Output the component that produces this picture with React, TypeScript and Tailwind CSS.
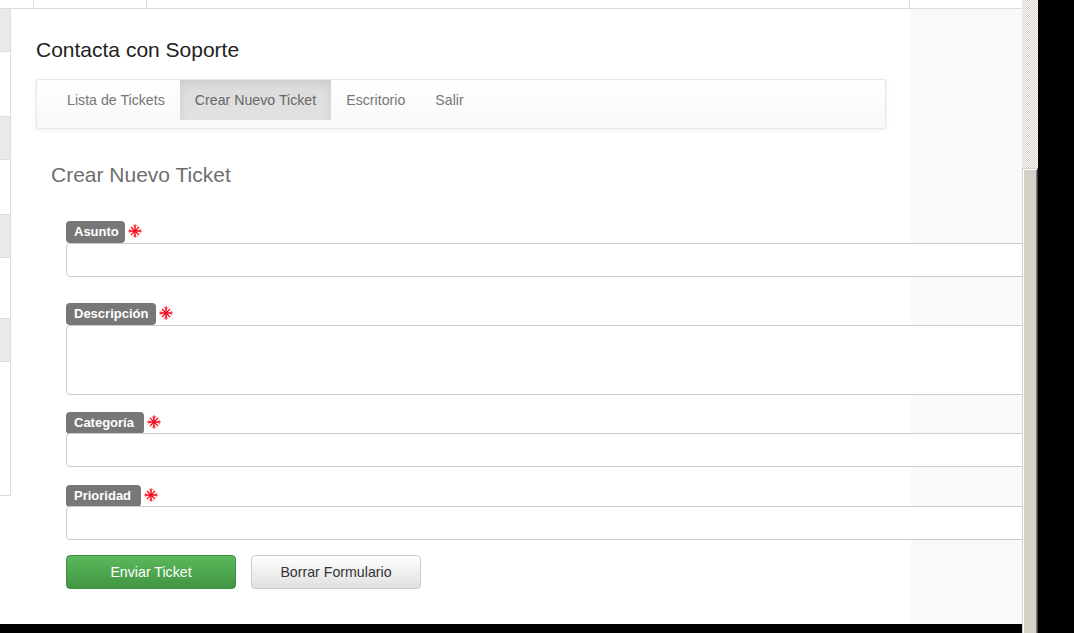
import React from 'react';

const Star = () => (
  <svg viewBox="0 0 14 14" className="-mt-0.5 h-[14px] w-[14px] shrink-0" fill="none">
    <path d="M4.6 1L7 3.4 9.4 1M4.6 13L7 10.6 9.4 13M1 4.6L3.4 7 1 9.4M13 4.6L10.6 7 13 9.4" stroke="#ff5a2c" strokeWidth="0.9" />
    <path d="M7 0.5v13M0.5 7h13" stroke="#f0001c" strokeWidth="1.4" />
    <path d="M3 3l8 8M11 3l-8 8" stroke="#f0001c" strokeWidth="1.2" />
  </svg>
);

const Label = ({ text, width }: { text: string; width: string }) => (
  <div className="flex h-[22px] items-center gap-[3px]">
    <span className={`flex h-[22px] items-center rounded-[4px] bg-[#777] pb-px pl-2 text-[13px] font-bold leading-none text-white ${width}`}>
      {text}
    </span>
    <Star />
  </div>
);

const fieldBox = 'relative block w-[1000px] rounded-[4px] border border-[#ccc] bg-white';

const tabs = ['Lista de Tickets', 'Crear Nuevo Ticket', 'Escritorio', 'Salir'];

const App = () => {
  return (
    <div className="flex h-[633px] w-[1074px] overflow-hidden bg-black font-['Liberation_Sans',Arial,sans-serif]">
      <div className="flex h-[624px] w-[1022px] shrink-0 flex-col overflow-hidden bg-white">
        {/* table header behind the modal */}
        <div className="flex h-[9px] shrink-0 border-b border-[#dcdde3]">
          <div className="w-[34px] border-r border-[#dcdde3]" />
          <div className="w-[113px] border-r border-[#dcdde3]" />
          <div className="w-[763px] border-r border-[#dcdde3]" />
        </div>
        <div className="flex min-h-0 flex-1">
          <div className="flex h-[487px] w-[11px] shrink-0 flex-col border-r border-b border-[#dcdde3]">
            <div className="h-[43px] border-b border-[#dcdde3] bg-[#e9e9e9]" />
            <div className="h-[65px] border-b border-[#dcdde3]" />
            <div className="h-[43px] border-b border-[#dcdde3] bg-[#e9e9e9]" />
            <div className="h-[55px] border-b border-[#dcdde3]" />
            <div className="h-[43px] border-b border-[#dcdde3] bg-[#e9e9e9]" />
            <div className="h-[61px] border-b border-[#dcdde3]" />
            <div className="h-[43px] border-b border-[#dcdde3] bg-[#e9e9e9]" />
          </div>
          <div className="min-w-0 flex-1 bg-[linear-gradient(to_right,#fff_900px,#f9f9f9_900px)] pl-[25px]">
            <h1 className="mt-[30px] text-[21px] leading-[22px] text-[#222]">Contacta con Soporte</h1>
            <nav className="mt-[18px] flex h-[50px] w-[850px] rounded-[2px] border border-[#e7e7e7] bg-gradient-to-b from-white to-[#f8f8f8] pl-[15px] shadow-[0_1px_5px_rgba(0,0,0,0.08)]">
              {tabs.map((tab) => (
                <a
                  key={tab}
                  className={
                    tab === 'Crear Nuevo Ticket'
                      ? 'flex h-10 items-center bg-gradient-to-b from-[#dbdbdb] to-[#e2e2e2] px-[15px] pt-0.5 text-[14.2px] text-[#666] shadow-[inset_0_3px_9px_rgba(0,0,0,0.075)]'
                      : 'flex h-10 items-center px-[15px] pt-0.5 text-[14.2px] text-[#777]'
                  }
                >
                  {tab}
                </a>
              ))}
            </nav>
            <div className="pl-[15px]">
              <h2 className="mt-[35px] text-[21px] leading-[22px] text-[#6e6e6e]">Crear Nuevo Ticket</h2>
              <form className="mt-[35px] pl-[15px]">
                <Label text="Asunto" width="w-[59px]" />
                <input className={`${fieldBox} h-[34px]`} />
                <div className="mt-[26px]">
                  <Label text="Descripción" width="w-[90px]" />
                </div>
                <textarea className={`${fieldBox} h-[70px] resize-none`} />
                <div className="mt-[17px]">
                  <Label text="Categoría" width="w-[78px]" />
                </div>
                <div className={`${fieldBox} -mt-px h-[34px]`} />
                <div className="mt-[18px]">
                  <Label text="Prioridad" width="w-[75px]" />
                </div>
                <div className={`${fieldBox} -mt-px h-[34px]`} />
                <div className="mt-[15px] flex gap-[15px]">
                  <button
                    type="button"
                    className="h-[34px] w-[170px] rounded-[4px] border border-[#3e8f3e] bg-gradient-to-b from-[#5cb85c] to-[#419641] pt-0.5 text-[14.2px] text-white"
                  >
                    Enviar Ticket
                  </button>
                  <button
                    type="button"
                    className="h-[34px] w-[170px] rounded-[4px] border border-[#ccc] bg-gradient-to-b from-white to-[#e0e0e0] pt-0.5 text-[14.2px] text-[#333]"
                  >
                    Borrar Formulario
                  </button>
                </div>
              </form>
            </div>
          </div>
        </div>
      </div>
      {/* scrollbar */}
      <div className="flex h-[633px] w-4 shrink-0 flex-col bg-[repeating-conic-gradient(#d4d0c8_0_25%,#fff_0_50%)] bg-[length:2px_2px]">
        <div className="mt-[168px] flex-1 border-t border-r border-l border-t-[#d4d0c8] border-r-[#404040] border-l-[#d4d0c8] bg-[#d4d0c8] shadow-[inset_1px_1px_0_#fff,inset_-1px_0_0_#808080]" />
      </div>
    </div>
  );
};

export default App;
